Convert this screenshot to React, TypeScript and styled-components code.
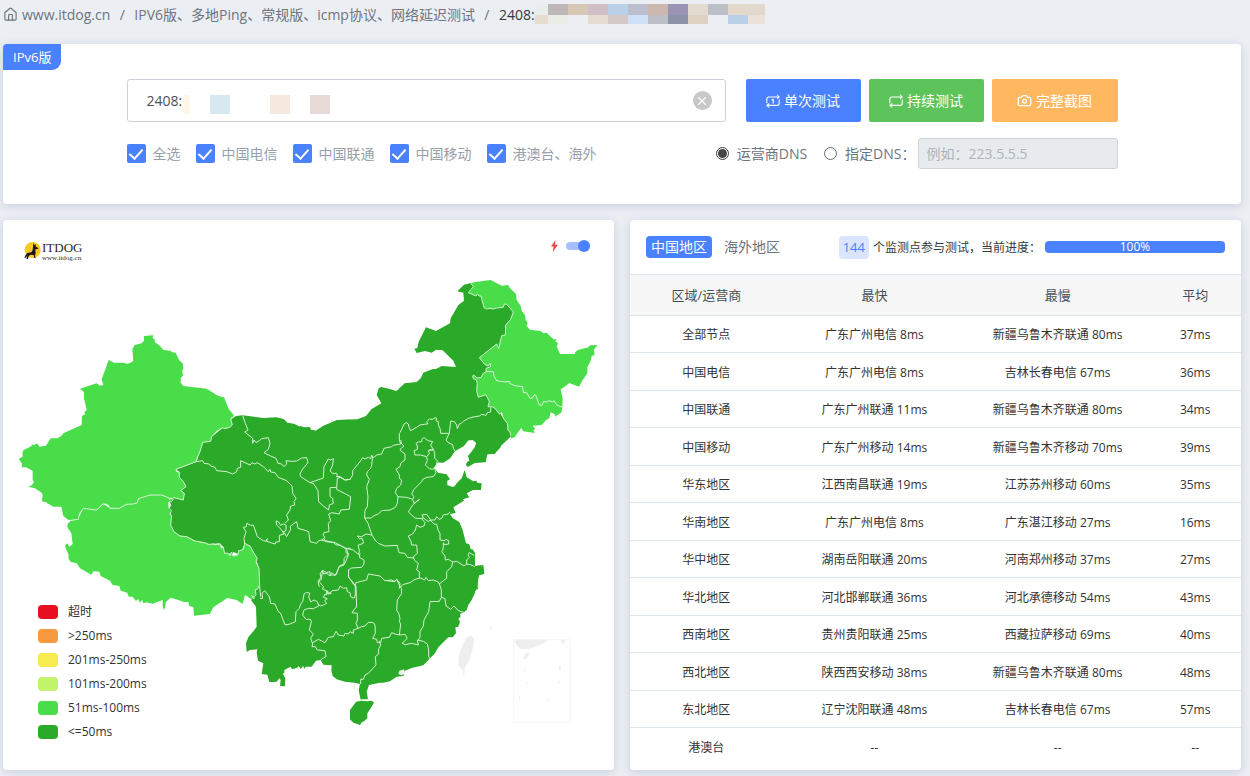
import React from "react";
import styled, { createGlobalStyle } from "styled-components";
import { Camera, House, X } from "lucide-react";

const blue = "#4a81ff";
const fast = "#2ba928";
const medium = "#49de49";
const idle = "#eeeeee";

const GlobalStyle = createGlobalStyle`
  * { box-sizing: border-box; }
  body {
    margin: 0;
    background: #ebeef3;
    color: #6c757d;
    font: 14px/21px "Open Sans", "Noto Sans CJK SC", sans-serif;
  }
  button, input { font: inherit; }
`;

const Page = styled.div`
  padding: 0 9px 6px 3px;
`;

/* ---------- breadcrumb ---------- */

const Breadcrumb = styled.nav`
  display: flex;
  align-items: center;
  height: 28px;
  margin-bottom: 16px;
  white-space: nowrap;
`;

const CrumbLink = styled.a`
  display: flex;
  align-items: center;
  gap: 4px;
  color: inherit;
  text-decoration: none;
`;

const Slash = styled.span`
  width: 24px;
  text-align: center;
`;

const Current = styled.span`
  color: #343a40;
`;

const Mosaic = styled.span`
  display: grid;
  grid-template-columns: 13px repeat(10, 20px) 17px;
  grid-template-rows: 11px 9px;
`;

const Tile = styled.i<{ $color: string }>`
  background: ${(p) => p.$color};
`;

const crumbTiles = [
  "#e9eeec", "#bdb8b7", "#d6c8b4", "#cfbfc7", "#bad0e7", "#bbbfcd",
  "#cdb8ad", "#9a93b3", "#e3dbd0", "#bcbfc6", "#e3d8cc", "#e3d8cc",
  "#e6dbcf", "#eaede4", "transparent", "#e6dbcf", "#d3c8c6", "#cde0f7",
  "#bcbfc5", "#8c92a8", "#dfd2c3", "transparent", "#b9d0e8", "#ebe1d8",
];

/* ---------- cards ---------- */

const Card = styled.section`
  position: relative;
  background: #fff;
  border-radius: 4px;
  box-shadow: 0 2px 8px rgba(110, 130, 160, 0.28);
`;

const Ribbon = styled.span`
  position: absolute;
  top: 0;
  left: 0;
  padding: 0 10px;
  border-radius: 4px 0 9px 0;
  background: ${blue};
  color: #fff;
  font-size: 13px;
  line-height: 26px;
`;

const Form = styled.form`
  max-width: 991px;
  margin: 0 auto;
  padding: 35px 0;
`;

const MainRow = styled.div`
  display: flex;
  gap: 8px;
`;

const HostField = styled.div`
  position: relative;
  flex: 1;
  margin-right: 12px;
`;

const HostInput = styled.input`
  display: block;
  width: 100%;
  height: 43px;
  padding: 0 44px 0 19px;
  border: 1px solid #ced1da;
  border-radius: 3px;
  color: #4c5056;
  outline: none;
`;

const HostMosaic = styled.span`
  position: absolute;
  top: 16px;
  left: 56px;
  display: grid;
  grid-template-columns: 7px 20px 20px 40px 20px 20px 20px;
  height: 19px;
`;

const hostTiles = [
  "#fff6e7", "transparent", "#d7e8f0", "transparent", "#f6e8dc", "transparent", "#e8d9d5",
];

const ClearButton = styled.button`
  position: absolute;
  top: 12px;
  right: 14px;
  display: flex;
  align-items: center;
  justify-content: center;
  width: 19px;
  height: 19px;
  padding: 0;
  border: 0;
  border-radius: 50%;
  background: #c8c8c8;
  color: #fff;
`;

const Action = styled.button<{ $color: string; $wide?: boolean }>`
  display: flex;
  align-items: center;
  justify-content: center;
  gap: 4px;
  width: ${(p) => (p.$wide ? 126 : 115)}px;
  height: 43px;
  padding: 0;
  border: 0;
  border-radius: 2px;
  background: ${(p) => p.$color};
  color: #fff;
`;

const OptionRow = styled.div`
  display: flex;
  align-items: center;
  height: 31px;
  margin-top: 16px;
  white-space: nowrap;
`;

const Carriers = styled.div`
  display: flex;
  gap: 15px;
  margin-right: auto;
  color: #98a0ab;
`;

const CheckLabel = styled.label`
  display: flex;
  align-items: center;
  gap: 7px;
`;

const Check = styled.input.attrs({ type: "checkbox" })`
  appearance: none;
  display: flex;
  justify-content: center;
  width: 19px;
  height: 19px;
  margin: 0;
  border-radius: 2px;
  background: #dfe3ea;
  &:checked { background: ${blue}; }
  &:checked::after {
    content: "";
    width: 6px;
    height: 11px;
    margin-top: 2px;
    border: solid #fff;
    border-width: 0 2px 2px 0;
    transform: rotate(42deg);
  }
`;

const RadioLabel = styled.label`
  display: flex;
  align-items: center;
  gap: 8px;
  margin-right: 17px;
`;

const Radio = styled.input.attrs({ type: "radio" })`
  appearance: none;
  display: grid;
  place-items: center;
  width: 13px;
  height: 13px;
  margin: 0;
  border: 1px solid #6d6d6d;
  border-radius: 50%;
  &:checked { border-color: #3f3f3f; }
  &:checked::after {
    content: "";
    width: 9px;
    height: 9px;
    border-radius: 50%;
    background: #454545;
  }
`;

const DnsGroup = styled.div`
  display: flex;
  align-items: center;
`;

const DnsLabel = styled(RadioLabel)`
  margin-right: 2px;
`;

const DnsInput = styled.input`
  width: 200px;
  height: 31px;
  padding: 0 8px;
  border: 1px solid #ced4da;
  border-radius: 3px;
  background: #e8ebee;
  &::placeholder { color: #adb3bc; }
`;

/* ---------- result panels ---------- */

const Panels = styled.div`
  display: grid;
  grid-template-columns: 1fr 1fr;
  gap: 16px;
  margin-top: 16px;
`;

const MapHeader = styled.header`
  display: flex;
  align-items: flex-start;
  gap: 7px;
  height: 50px;
  padding: 20px 24px 0 20px;
`;

const Logo = styled.a`
  display: flex;
  gap: 1px;
  margin-right: auto;
  color: #2f2626;
  text-decoration: none;
  font-family: "Liberation Serif", serif;
`;

const LogoText = styled.span`
  display: grid;
  font-size: 13px;
  line-height: 15px;
`;

const LogoSite = styled.small`
  font-size: 7px;
  line-height: 2px;
`;

const Switch = styled.input.attrs({ type: "checkbox" })`
  appearance: none;
  display: flex;
  align-items: center;
  justify-content: flex-end;
  width: 24px;
  height: 8px;
  margin: 2px 0 0;
  border-radius: 4px;
  background: #a5c0ff;
  &::after {
    content: "";
    width: 12px;
    height: 12px;
    flex: none;
    border-radius: 50%;
    background: ${blue};
  }
`;

const MapSvg = styled.svg`
  display: block;
  width: 100%;
`;

const Legend = styled.ul`
  position: absolute;
  left: 35px;
  bottom: 26px;
  margin: 0;
  padding: 0;
  list-style: none;
  color: #333;
  font-size: 12px;
  line-height: 24px;
`;

const LegendItem = styled.li<{ $color: string }>`
  display: flex;
  align-items: center;
  gap: 10px;
  &::before {
    content: "";
    width: 20px;
    height: 14px;
    border-radius: 4px;
    background: ${(p) => p.$color};
  }
`;

const ResultHeader = styled.header`
  display: flex;
  align-items: center;
  height: 54px;
  padding: 0 16px;
  white-space: nowrap;
`;

const Tab = styled.button<{ $active?: boolean }>`
  height: 22px;
  margin-right: 7px;
  padding: 0 5px;
  border: 0;
  border-radius: 4px;
  background: ${(p) => (p.$active ? blue : "none")};
  color: ${(p) => (p.$active ? "#fff" : "#6c757d")};
  line-height: 22px;
`;

const Status = styled.div`
  display: flex;
  align-items: center;
  gap: 4px;
  margin-left: auto;
  color: #343a40;
  font-size: 12px;
`;

const Count = styled.span`
  padding: 0 4px;
  border-radius: 4px;
  background: #dbe5ff;
  color: ${blue};
  font-size: 13px;
  line-height: 23px;
`;

const Progress = styled.div`
  width: 180px;
  border-radius: 4px;
  background: ${blue};
  color: #fff;
  font-size: 12px;
  line-height: 12px;
  text-align: center;
`;

const Table = styled.table`
  width: 100%;
  table-layout: fixed;
  border-collapse: separate;
  border-spacing: 0;
  color: #333;
  font-size: 12px;
  line-height: 18px;
  text-align: center;
  white-space: nowrap;
  th {
    height: 42px;
    padding: 0;
    border: solid #dee5eb;
    border-width: 1px 0;
    background: #f7f7f7;
    color: #43505a;
    font-size: 13px;
    font-weight: 400;
  }
  td {
    height: 38px;
    padding: 2px 0 0;
    border-bottom: 1px solid #dee5eb;
  }
  tbody tr:nth-child(odd) td { height: 37px; }
  tbody tr:last-child td { border-bottom: 0; }
`;

const Col = styled.col<{ $share: number }>`
  width: ${(p) => p.$share}%;
`;

const RepeatIcon = ({ once }: { once?: boolean }) => (
  <svg width="14" height="14" viewBox="0 0 14 14" fill="none" stroke="currentColor" strokeWidth="1.1" strokeLinecap="round" strokeLinejoin="round">
    <path d="M.8 8.8V5a2 2 0 0 1 2-2h10.2M11.4 1l1.8 2-1.8 1.4M13.2 5.8V9a2 2 0 0 1-2 2.4H1M2.8 13.2l-2-1.8 2-1.6" />
    {once && <path d="M6 6l1.2-.8v3.9" />}
  </svg>
);

const DogIcon = () => (
  <svg width="18" height="20" viewBox="0 0 54 60">
    <circle cx="29" cy="30" r="24" fill="#fbc926" />
    <path fill="#1d1714" d="M31 9l3 7 3-5 2 9 7 4-1 3-8 1 1 12-2 7 2 8-4-1-2-9-10-1-5 5-2 8-5 0 3-10-5 6-4 1 4-9 5-6 12-2 4-7z" />
  </svg>
);

/* The map is drawn in thirds of a pixel; each sheet below has its own origin. */
const xinjiangEdge =
  "M703 318L692 326 697 345 689 352 672 356 669 353 650 364 635 380 632 394 608 397 605 409 598 430 593 439 588 455 528 478 530 485 538 486 538 502 550 515 558 530 542 542 553 550 550 570 522 563 508 568 506 563 500 561 485 555 450 555 415 566 412 578 400 582 380 583 358 595 330 595 325 586 318 582 308 582 290 600 250 595 238 612 235 628 212 631";
const xinjiangCoast =
  "L204 629 190 618 184 590 160 590 142 580 138 576 128 575 126 570 128 555 125 548 105 535 85 530 95 526 102 517 98 510 98 482 78 472 65 472 66 461 56 446 68 440 67 430 70 421 95 408 95 403 102 406 112 400 118 410 138 407 152 385 172 385 184 378 190 370 245 345 246 318 256 312 253 306 260 300 252 265 252 246 240 236 290 220 300 227 310 225 305 208 326 150 342 158 372 158 382 162 394 157 400 152 397 118 404 105 425 100 432 92 432 78 460 76 458 84 465 90 464 96 480 108 490 120 512 122 515 126 527 128 537 150 548 160 550 175 546 185 550 195 542 205 542 218 550 228 620 236 655 258 672 262 685 295Z";

const tibetEdge =
  "M358 84L370 88 364 95 356 97 357 115 364 122 360 132 365 138 362 165 372 185 390 198 410 200 432 212 470 220 475 224 490 221 496 224 510 222 514 234 520 232 524 250 534 249 540 257 545 246 549 258 563 255 566 243 580 238 584 220 600 228 612 250 622 265 618 275 627 295 629 350 632 380";
const tibetFill =
  "M62 152L84 148 100 114 140 120 160 102 180 115 208 114 235 102 262 98 268 85 300 75 335 74 358 84 370 88 356 97 357 115 365 138 362 165 372 185 390 198 410 200 432 212 470 220 496 224 510 222 514 234 520 232 524 250 534 249 540 257 545 246 549 258 563 255 566 243 580 238 584 220 600 228 612 250 622 265 618 275 627 295 628 350 616 360 612 378 604 388 585 374 578 402 560 390 532 384 515 395 495 408 488 415 480 432 432 437 430 412 418 408 415 396 402 396 385 390 362 383 348 395 343 421 338 410 338 390 308 401 290 397 280 400 276 389 270 398 264 387 258 393 248 380 236 380 232 368 212 362 208 348 188 345 180 332 152 318 148 305 130 304 124 314 90 295 80 280 62 276 55 265 56 255 46 232 46 225 52 220 58 230 68 222 64 190 52 172 53 162Z";

const northEdge =
  "487 412 470 405 462 392 458 396 448 392 442 396 430 395 426 406 418 405 407 375 403 374 398 384 390 385 380 368 370 368 368 350 345 347 330 341 328 334 315 336 290 332 282 318 280 305 258 305";
const amurWest =
  "M258 305L258 295 272 290 270 280 265 288 255 284 238 263 290 222 296 236 305 197 316 195 317 165 332 148 340 126 320 103 313 102 310 112 290 114 280 117 270 115 260 117 252 113 243 78 237 78 233 72 228 78 205 68 220 50 212 39";
const amurCoast =
  "L232 35 272 30 305 47 325 45 329 53 338 62 348 72 350 90 362 108 365 122 375 135 377 150 383 158 380 168 390 179 422 183 430 190 440 188 460 208 470 208 466 214 474 220 470 230 480 252 524 252 526 246 534 240 565 232 570 226 592 225 585 235 581 240 584 255 575 258 573 270 562 292 562 310 548 330 537 350 508 339 494 350 482 358 488 385 ";
const jilinWest =
  "M258 305L250 310 243 322 232 324 221 315 218 318 220 326 228 329 232 340 230 362 235 382 258 374 268 395 264 410 278 411 285 415 298 432 305 428 310 445 322 460 324 480 332 490";

const darkSheets: { at: [number, number]; d: string }[] = [
  {
    at: [450, 1170],
    d: "M258 78L278 76 340 84 380 82 402 88 412 98 432 101 450 110 465 114 480 112 482 119 498 123 518 109 562 90 602 89V602H332L331 570 327 528 318 512 322 502 312 490 300 468 284 462 276 480 264 482 264 492 250 486 247 498 240 490 230 495 222 488 220 470 208 460 180 463 158 456 134 452 112 440 88 438 72 425 62 408 64 375 56 360 64 345 56 330 64 322 100 330 103 310 92 300 108 290 100 275 88 262 88 246 78 238 140 215 148 190 158 157 180 154 185 140 218 114 225 118 245 104 240 90Z",
  },
  {
    at: [900, 1170],
    d: "M0 107L12 112 30 112 32 119 47 122 70 108 112 90 172 88 198 78 214 58 244 40 230 15 236 -5 244 -9 270 -3 288 3 302 -5H602V172L585 190 562 193 557 200 557 216 525 219 502 230 498 222 508 212 504 198 528 170 528 158 518 150 502 151 490 168 464 184 450 205 430 217 412 217 402 232 414 248 440 253 450 268 442 272 442 285 458 291 464 289 470 280 485 265 494 240 500 262 520 274 529 272 532 278 545 280 543 300 519 300 500 310 508 322 488 328 496 336 492 332 460 352 467 369 450 372 458 384 478 396 488 420 498 460 508 463 512 478 524 486 524 528 550 526 553 552 536 556 534 575 528 602H0Z",
  },
  {
    at: [1200, 810],
    d: "M-4 356L14 340 50 336 62 325 70 308 98 297 108 297 125 288 168 291 160 272 128 241 108 239 95 248 75 243 50 249 43 236 52 234 56 215 78 172 108 183 150 160 152 145 175 105 192 92 190 68 172 64 192 44 212 39 250 50 335 90 352 130 335 180 315 230 270 290 260 380 290 420 325 460 332 500 290 540 285 552 262 553 257 577 225 577 205 590 198 585 202 575 212 572 206 558 225 530 229 517 222 510 205 511 192 528 165 543 150 565 130 578 115 577 103 590 105 600H-4Z",
  },
  {
    at: [690, 1650],
    d: "M68 -2L82 30 88 70 86 110 74 125 72 140 63 150 78 170 80 230 73 240 55 262 48 280 50 306 60 300 82 298 80 308 84 332 100 340 95 372 112 374 118 396 130 396 140 395 148 385 152 390 150 408 165 409 166 385 158 370 163 370 163 360 182 350 186 358 202 353 206 348 212 357 220 347 222 357 228 350 245 350 258 332 272 330 280 344 305 346 304 362 308 378 320 388 345 395 372 398 390 402 386 420 392 450 414 448 410 425 417 405 450 398 460 398 480 394 500 380 520 378 525 362 545 354 580 346 600 325 615 310 625 292 655 262 668 262 678 250 676 232 685 230 690 215 685 206 692 200 690 192 704 185 710 180 715 165 725 150 735 128 736 118 744 118 742 90 748 75 762 70 758 46 735 48 734 10 728 -2Z",
  },
];

const borderSheets: { at: [number, number]; d: string }[] = [
  {
    at: [450, 1170],
    d: "M278 76L286 100 294 120 284 126 308 145 308 160 312 150 318 158 328 152 335 146 355 143 360 160 355 178 342 188 362 198 378 205 384 220 395 222 402 230 410 222 408 212 425 214 440 213 455 204 470 203 474 218 456 240 450 252 452 260 480 278 520 264 522 230 535 207 542 210 550 206 548 225 540 243 548 250 560 250 562 258 570 262 585 270 602 268M480 278L490 280 504 302 506 335 520 348 536 360 538 345 550 340 548 325 540 320 540 293 560 292 562 265 570 262M560 292V298L602 320 598 358 572 360 568 372 545 368 536 372 542 392 535 400 537 425 522 428 519 435 525 443 515 450 506 452 500 460 480 455 476 425 462 420 444 415 440 395 432 400 420 410 422 418 410 440 400 425 408 422 408 405 400 402 392 406 385 395 378 393 380 405 395 420 402 432 388 436 388 455 377 456 375 462 350 454 352 446 348 454 340 452 322 440 310 405 302 406 290 400 289 410 280 412 288 425 282 445 284 462M140 215L158 212 162 220 178 222 182 228 195 232 200 242 230 245 248 252 260 245 262 235 272 232 272 212 300 225 306 218 314 222 322 218 340 230 355 245 360 238 362 246 375 248 385 262 410 272 426 288 428 310 438 325 432 335 434 345 422 348 420 360 410 375 415 390 405 400M515 450L530 455 552 458 556 464 570 466 585 475 602 475M588 475L588 488 596 492 582 505 582 525 568 530 560 548 555 556 545 548 540 558 530 550 520 552 518 540 510 552 515 568 504 575 508 590",
  },
  {
    at: [900, 1170],
    d: "M108 260L120 260 135 270 150 268 158 255 158 242 180 215 188 203 195 207 205 202 212 206 215 195 220 203 230 195 245 192 252 175 275 170 280 166 302 162 298 150 298 130M218 200L215 225 212 235 202 245 200 255 208 268 200 290 204 320 202 350 195 360 194 384M302 150L305 162 312 168 300 178 304 184 315 192 315 210 302 220 300 230 288 238 298 255 298 265 305 270 302 285 290 295 286 308 294 320 292 340 286 352 270 360 245 362 235 372 220 378 214 384 194 384M194 384L204 400 209 415 216 435M216 435L225 450 235 460 255 468 292 466 295 480 297 488 315 490 322 502 342 504M216 435L198 432 185 440 172 438 178 446 188 446 190 460 174 466 178 480 176 494 160 480 138 475 125 468 105 458 75 452 72 446M180 490L178 502 192 510 192 522 185 532 155 534 145 540 146 560 155 575 165 588 168 578 200 570 205 552 240 558 255 572 275 570 285 575 290 568 294 572 300 580 298 595M292 320L320 322 338 328 342 320 335 312 342 298 355 285 365 275 368 268 380 262 400 260 408 248 402 232M338 328L342 340 358 328 338 345 325 366 345 384 360 386 370 384 366 375 380 373 392 390 405 390 410 380 418 388 425 385 430 375 445 372 450 366M365 386L375 398 372 408 360 412 350 405 346 420 338 432 325 438 333 455 335 465 350 465 352 490 340 500 344 512 355 520 350 540 358 545 358 565M370 384L385 395 390 390 402 402 410 403 415 422 420 430 420 450 435 452 438 448 446 452 446 462 434 464 430 458 430 470 428 482 425 485 435 498 436 510 445 508 458 516 455 530 440 545 440 565 430 572 418 582M418 582L415 576 400 570 385 572 378 562 374 570 362 564 345 568 330 578 308 584 298 595M458 516L470 514 480 520 492 528 500 522 500 510 508 502 504 494 508 488 522 496M498 522L512 524 524 530M372 142L378 148 385 152 398 155 392 165 400 178 385 182 388 190 380 200 362 195 345 195 342 182 352 178 352 168 348 160 355 156 365 155 366 148ZM400 178L404 188 404 205 412 212 408 230 398 238 388 236 376 225 382 212 380 200M385 185L390 178 398 182",
  },
  {
    at: [1200, 810],
    d: "M272 412L272 426 262 428 258 436 245 433 238 438 225 440 205 445 190 454 184 460 178 462 172 476 170 465 163 455 152 453 148 490 138 510 145 518 158 524 160 535 165 543M148 490H122L120 475 115 465 115 455 108 452 110 445 105 443 98 448 88 447 80 455 84 462 78 462 60 465 50 472 32 482 28 475 25 462 18 458 12 462 4 480 0 488",
  },
  {
    at: [690, 1650],
    d: "M90 145L98 145 96 130 104 122 118 140 122 160 135 162 145 185 152 190 165 225 180 222 196 215 198 185 208 175 212 162 218 155 222 132 230 127 240 130 236 140 242 156 252 150 262 155 266 168 250 176 235 175 222 180 218 195 228 208 242 208 244 215 240 232 238 240 250 252 242 265 248 282 246 290 256 290 262 300 285 302 288 320 278 325 272 330M350 -2L355 15 345 40 335 45 328 48 318 75 300 75 300 65 290 68 278 62 275 80 265 92 280 110 278 118 290 122 296 132 305 130M264 162L272 168 280 165 290 160 284 152 292 146 280 142 285 132 290 135 290 122 300 130 306 122 325 120 330 108 340 115 350 113 352 125 360 128 362 140 372 145 376 135 376 108 368 95 355 82 356 60M290 122L292 130 296 132M378 108L380 172 374 176 366 188 382 190 382 210 378 220 384 235M384 235L370 240 370 250 360 245 355 252 345 250 342 258 325 255 318 244 310 260 295 262 285 278 265 268 248 278M384 235L395 230 405 228 415 217 430 218 435 225 436 250 428 265 440 268 442 278 452 278M448 272L452 285 445 300 446 312 436 320 438 345 415 370 405 375 400 388 392 388 392 402M452 278L455 265 478 262 485 248 495 252 508 255 525 253 532 265 516 280 526 284 545 280 565 285 562 272M508 255L512 222 508 215 510 205 506 190 500 180 502 150 515 130 514 115 508 105 500 88 492 95 470 92M628 100L634 120 634 142 628 154 600 155 596 185 582 210 580 228 570 245 570 262 562 275M635 142L645 146 648 168 662 178 672 168 685 182 704 188M562 270L580 274 592 282 596 300 596 320 602 330",
  },
];

const ChinaMap = () => (
  <MapSvg viewBox="9 810 1833 1500" role="img" aria-label="中国地区延迟分布">
    <g fill={fast}>
      {darkSheets.map((s, i) => (
        <path key={i} transform={`translate(${s.at[0]} ${s.at[1]})`} d={s.d} />
      ))}
      <path transform="translate(690 1650)" d="M375 460L378 455 395 452 410 454 425 452 432 458 422 475 412 490 412 505 400 515 396 516 390 525 370 518 360 508 360 480Z" />
    </g>
    <g fill={medium}>
      <path transform="translate(150 1410)" d={tibetFill} />
      <path transform="translate(0 930)" d={xinjiangEdge + xinjiangCoast} />
      <path transform="translate(1200 810)" d={amurWest + amurCoast + northEdge + "Z"} />
      <path
        transform="translate(1200 810)"
        d={jilinWest + "L333 505 345 502 350 492 364 474 370 484 404 489 400 480 406 477 398 467 425 465 438 450 448 445 452 427 463 432 470 448 467 438 484 428 " + northEdge + "Z"}
      />
    </g>
    <g fill="none" stroke="#d3f3d0" strokeWidth="3" strokeLinejoin="round">
      <path transform="translate(0 930)" d={xinjiangEdge} />
      <path transform="translate(150 1410)" d={tibetEdge} />
      <path transform="translate(150 1410)" d="M628 348L622 358 616 360 618 375 612 380 612 386 605 376" />
      <path transform="translate(1200 810)" d={amurWest + "M" + northEdge + jilinWest} />
      {borderSheets.map((s, i) => (
        <path key={i} transform={`translate(${s.at[0]} ${s.at[1]})`} d={s.d} />
      ))}
      <path transform="translate(690 1650)" d="M373 402V420M392 449H414" />
    </g>
    <g fill={idle}>
      <path transform="translate(690 1650)" d="M505 372L508 362 522 358 526 370 515 376ZM710 262L722 257 733 263 730 290 718 330 706 350 702 382 699 362 685 345 686 318 698 285Z" />
      <path transform="translate(1350 1800)" d="M192 124L205 118H302L270 135 235 147 210 146ZM332 120H346L340 135ZM116 90L125 82 128 86ZM226 160L239 158 232 175 220 178ZM345 152L354 136 356 138ZM331 176L337 166 338 168ZM327 195H332V210H327ZM320 254L330 240 328 248ZM291 306L300 291 299 298ZM222 202L228 216 224 212ZM226 252L236 244 234 250ZM205 291L210 290 212 308ZM252 338L268 332 262 337Z" />
      <path transform="translate(1350 1800)" fill="none" stroke="#f5f5f5" strokeWidth="3" d="M191 119H361V366H191Z" />
    </g>
  </MapSvg>
);

const carriers = ["全选", "中国电信", "中国联通", "中国移动", "港澳台、海外"];

const legend: [string, string][] = [
  ["超时", "#e60e1f"],
  [">250ms", "#f6993f"],
  ["201ms-250ms", "#f6ec50"],
  ["101ms-200ms", "#c2f56c"],
  ["51ms-100ms", medium],
  ["<=50ms", fast],
];

const rows = [
  ["全部节点", "广东广州电信 8ms", "新疆乌鲁木齐联通 80ms", "37ms"],
  ["中国电信", "广东广州电信 8ms", "吉林长春电信 67ms", "36ms"],
  ["中国联通", "广东广州联通 11ms", "新疆乌鲁木齐联通 80ms", "34ms"],
  ["中国移动", "广东广州移动 14ms", "新疆乌鲁木齐移动 70ms", "39ms"],
  ["华东地区", "江西南昌联通 19ms", "江苏苏州移动 60ms", "35ms"],
  ["华南地区", "广东广州电信 8ms", "广东湛江移动 27ms", "16ms"],
  ["华中地区", "湖南岳阳联通 20ms", "河南郑州移动 37ms", "27ms"],
  ["华北地区", "河北邯郸联通 36ms", "河北承德移动 54ms", "43ms"],
  ["西南地区", "贵州贵阳联通 25ms", "西藏拉萨移动 69ms", "40ms"],
  ["西北地区", "陕西西安移动 38ms", "新疆乌鲁木齐联通 80ms", "48ms"],
  ["东北地区", "辽宁沈阳联通 48ms", "吉林长春电信 67ms", "57ms"],
  ["港澳台", "--", "--", "--"],
];

export default function App() {
  return (
    <Page>
      <GlobalStyle />
      <Breadcrumb>
        <CrumbLink href="#home">
          <House size={15} strokeWidth={1.8} />
          www.itdog.cn
        </CrumbLink>
        <Slash>/</Slash>
        <CrumbLink href="#ping">IPV6版、多地Ping、常规版、icmp协议、网络延迟测试</CrumbLink>
        <Slash>/</Slash>
        <Current>2408:</Current>
        <Mosaic>
          {crumbTiles.map((c, i) => (
            <Tile key={i} $color={c} />
          ))}
        </Mosaic>
      </Breadcrumb>

      <Card>
        <Ribbon>IPv6版</Ribbon>
        <Form onSubmit={(e) => e.preventDefault()}>
          <MainRow>
            <HostField>
              <HostInput aria-label="Host" defaultValue="2408:" />
              <HostMosaic>
                {hostTiles.map((c, i) => (
                  <Tile key={i} $color={c} />
                ))}
              </HostMosaic>
              <ClearButton type="button" aria-label="清除">
                <X size={14} strokeWidth={2} />
              </ClearButton>
            </HostField>
            <Action type="submit" $color={blue}>
              <RepeatIcon once />
              单次测试
            </Action>
            <Action type="button" $color="#5dc45b">
              <RepeatIcon />
              持续测试
            </Action>
            <Action type="button" $color="#ffb860" $wide>
              <Camera size={15} strokeWidth={2} />
              完整截图
            </Action>
          </MainRow>
          <OptionRow>
            <Carriers>
              {carriers.map((name) => (
                <CheckLabel key={name}>
                  <Check defaultChecked />
                  {name}
                </CheckLabel>
              ))}
            </Carriers>
            <DnsGroup>
              <RadioLabel>
                <Radio name="dns" defaultChecked />
                运营商DNS
              </RadioLabel>
              <DnsLabel>
                <Radio name="dns" />
                指定DNS：
              </DnsLabel>
              <DnsInput aria-label="指定DNS" placeholder="例如：223.5.5.5" disabled />
            </DnsGroup>
          </OptionRow>
        </Form>
      </Card>

      <Panels>
        <Card>
          <MapHeader>
            <Logo href="#home">
              <DogIcon />
              <LogoText>
                ITDOG
                <LogoSite>www.itdog.cn</LogoSite>
              </LogoText>
            </Logo>
            <svg width="9" height="12" viewBox="0 0 9 12">
              <path fill="#f0474c" d="M5.6 0L1 6.6h2.6L2.8 12 8 4.8H5z" />
            </svg>
            <Switch aria-label="动画" defaultChecked />
          </MapHeader>
          <ChinaMap />
          <Legend>
            {legend.map(([label, color]) => (
              <LegendItem key={label} $color={color}>
                {label}
              </LegendItem>
            ))}
          </Legend>
        </Card>

        <Card>
          <ResultHeader>
            <Tab type="button" $active>中国地区</Tab>
            <Tab type="button">海外地区</Tab>
            <Status>
              <Count>144</Count>
              个监测点参与测试，当前进度：
              <Progress>100%</Progress>
            </Status>
          </ResultHeader>
          <Table>
            <colgroup>
              <Col $share={25} />
              <Col $share={30} />
              <Col $share={30} />
              <Col $share={15} />
            </colgroup>
            <thead>
              <tr>
                <th scope="col">区域/运营商</th>
                <th scope="col">最快</th>
                <th scope="col">最慢</th>
                <th scope="col">平均</th>
              </tr>
            </thead>
            <tbody>
              {rows.map((row) => (
                <tr key={row[0]}>
                  {row.map((cell, i) => (
                    <td key={i}>{cell}</td>
                  ))}
                </tr>
              ))}
            </tbody>
          </Table>
        </Card>
      </Panels>
    </Page>
  );
}
